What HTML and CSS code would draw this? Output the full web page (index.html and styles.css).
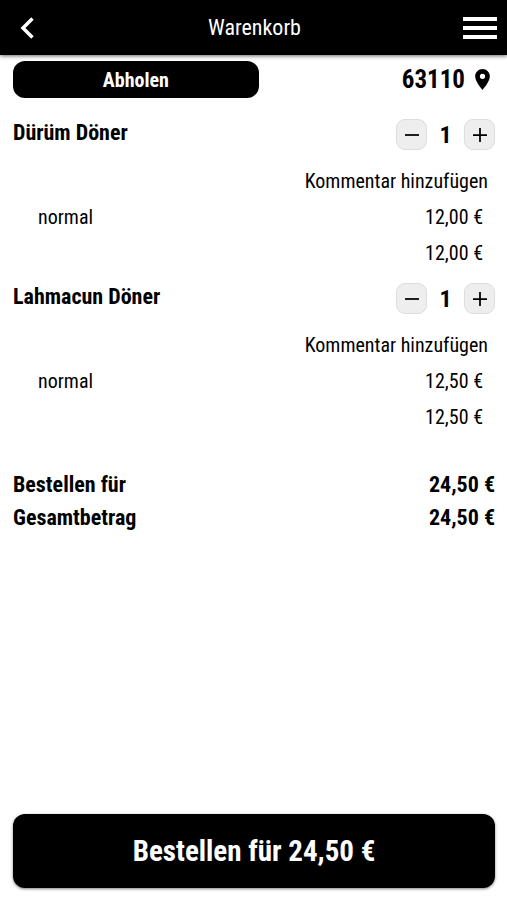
FILE: index.html
```html
<!DOCTYPE html>
<html lang="de">
<head>
  <meta charset="utf-8">
  <meta name="viewport" content="width=device-width, initial-scale=1">
  <title>Warenkorb</title>
  <link rel="stylesheet" href="styles.css">
</head>
<body>
  <header class="topbar">
    <button class="icon-button" type="button" aria-label="Zurück">
      <svg width="30" height="30" viewBox="0 0 30 30" fill="none" stroke="currentColor" stroke-width="3.500"><path d="M20.500 5.500 11 15 20.500 24.500"/></svg>
    </button>
    <h1 class="title">Warenkorb</h1>
    <button class="icon-button menu-button" type="button" aria-label="Menü">
      <svg width="34" height="24" viewBox="0 0 34 24" fill="currentColor"><path d="M0 1h34v4H0zM0 10h34v4H0zM0 19h34v4H0z"/></svg>
    </button>
  </header>

  <main class="cart">
    <div class="delivery">
      <button class="pickup" type="button">Abholen</button>
      <a class="location" href="#">63110
        <svg width="15" height="21" viewBox="0 0 14 20" fill="currentColor"><path d="M7 0C3.130 0 0 3.130 0 7c0 5.250 7 13 7 13s7-7.750 7-13c0-3.870-3.130-7-7-7zm0 9.500a2.500 2.500 0 1 1 0-5 2.500 2.500 0 0 1 0 5z"/></svg>
      </a>
    </div>

    <section class="item">
      <div class="item-head">
        <h2 class="item-name">Dürüm Döner</h2>
        <div class="stepper">
          <button class="step" type="button" aria-label="Weniger"><svg width="14" height="14" viewBox="0 0 14 14" stroke="currentColor" stroke-width="1.750"><path d="M0 7h14"/></svg></button>
          <span class="count">1</span>
          <button class="step" type="button" aria-label="Mehr"><svg width="14" height="14" viewBox="0 0 14 14" stroke="currentColor" stroke-width="1.750"><path d="M0 7h14M7 0v14"/></svg></button>
        </div>
      </div>
      <a class="comment" href="#">Kommentar hinzufügen</a>
      <div class="line"><span>normal</span><span>12,00 €</span></div>
      <div class="line line-sum"><span>12,00 €</span></div>
    </section>

    <section class="item">
      <div class="item-head">
        <h2 class="item-name">Lahmacun Döner</h2>
        <div class="stepper">
          <button class="step" type="button" aria-label="Weniger"><svg width="14" height="14" viewBox="0 0 14 14" stroke="currentColor" stroke-width="1.750"><path d="M0 7h14"/></svg></button>
          <span class="count">1</span>
          <button class="step" type="button" aria-label="Mehr"><svg width="14" height="14" viewBox="0 0 14 14" stroke="currentColor" stroke-width="1.750"><path d="M0 7h14M7 0v14"/></svg></button>
        </div>
      </div>
      <a class="comment" href="#">Kommentar hinzufügen</a>
      <div class="line"><span>normal</span><span>12,50 €</span></div>
      <div class="line line-sum"><span>12,50 €</span></div>
    </section>

    <dl class="totals">
      <div class="total"><dt>Bestellen für</dt><dd>24,50 €</dd></div>
      <div class="total"><dt>Gesamtbetrag</dt><dd>24,50 €</dd></div>
    </dl>
  </main>

  <footer class="checkout">
    <button class="order" type="button">Bestellen für 24,50 €</button>
  </footer>
</body>
</html>
```
FILE: styles.css
```css
* {
  box-sizing: border-box;
}

body {
  margin: 0;
  min-height: 100vh;
  display: flex;
  flex-direction: column;
  background: #fff;
  color: #000;
  font-family: "Roboto Condensed", Roboto, sans-serif;
  font-size: 20px;
  line-height: 24px;
}

button {
  padding: 0;
  border: 0;
  font: inherit;
  cursor: pointer;
}

a {
  color: inherit;
  text-decoration: none;
}

svg {
  display: block;
}

h1,
h2,
dl,
dd {
  margin: 0;
}

.topbar {
  display: grid;
  grid-template-columns: 40px 1fr 40px;
  align-items: center;
  height: 55px;
  padding: 0 10px 0 12px;
  background: #000;
  color: #fff;
  box-shadow: 0 1px 4px rgba(0, 0, 0, 0.6);
}

.icon-button {
  background: none;
  color: inherit;
}

.menu-button {
  justify-self: end;
}

.title {
  font-size: 22px;
  font-weight: 400;
  text-align: center;
}

.cart {
  flex: 1;
  padding: 6px 12px 0 13px;
}

.delivery {
  display: flex;
  justify-content: space-between;
  align-items: center;
  margin-bottom: 20px;
}

.pickup {
  width: 51%;
  height: 37px;
  border-radius: 12px;
  background: #000;
  color: #fff;
  font-weight: 700;
}

.location {
  display: flex;
  align-items: center;
  gap: 10px;
  padding-right: 5px;
  font-size: 25px;
  font-weight: 700;
}

.item {
  margin-bottom: 17px;
}

.item-head {
  display: flex;
  justify-content: space-between;
  margin-bottom: 19px;
}

.item-name {
  font-size: 22px;
  line-height: 30px;
}

.stepper {
  display: flex;
  align-items: center;
  padding-top: 1px;
}

.step {
  display: grid;
  place-items: center;
  width: 31px;
  height: 31px;
  border: 1px solid #ddd;
  border-radius: 9px;
  background: #eee;
  color: #000;
}

.count {
  width: 37px;
  font-size: 24px;
  font-weight: 700;
  text-align: center;
}

.comment {
  display: block;
  padding-right: 7px;
  text-align: right;
}

.line {
  display: flex;
  justify-content: space-between;
  margin-top: 12px;
  padding: 0 12px 0 25px;
}

.line-sum {
  justify-content: flex-end;
}

.totals {
  padding-top: 22px;
  font-size: 22px;
  font-weight: 700;
  line-height: 33px;
}

.total {
  display: flex;
  justify-content: space-between;
}

.checkout {
  padding: 12px 12px 12px 13px;
}

.order {
  width: 100%;
  height: 74px;
  border-radius: 12px;
  background: #000;
  color: #fff;
  font-size: 29px;
  font-weight: 700;
  box-shadow: 0 1px 3px rgba(0, 0, 0, 0.5);
}
```
